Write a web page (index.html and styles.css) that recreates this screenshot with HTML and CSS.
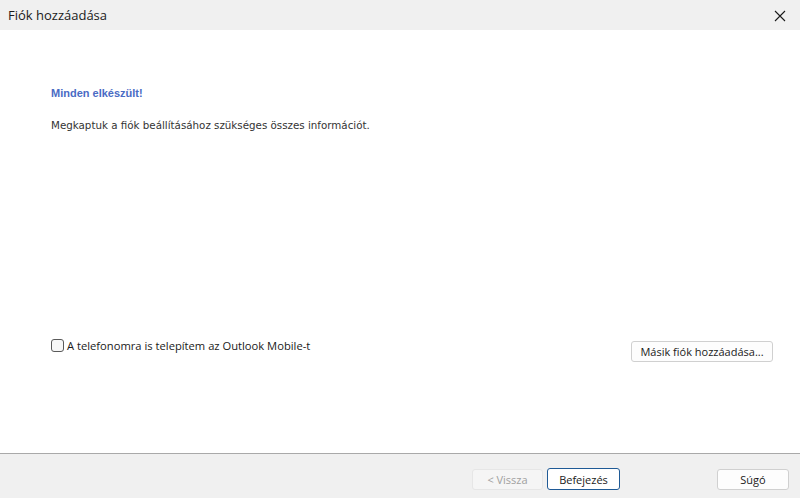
FILE: index.html
```html
<!DOCTYPE html>
<html lang="hu">

<head>
    <meta charset="UTF-8">
    <meta name="viewport" content="width=device-width, initial-scale=1.0">
    <title>Fiók hozzáadása</title>

    <link rel="stylesheet" href="styles.css">
</head>

<body>
    <div class="window">
        <div class="titlebar">
            <span class="title">Fiók hozzáadása</span>
            <span class="close">
                <svg width="12" height="12" viewBox="0 0 12 12">
                    <path d="M1 1 L11 11 M11 1 L1 11" stroke="#1a1a1a" stroke-width="1.1" fill="none" />
                </svg>
            </span>
        </div>

        <div class="content">
            <h2 class="heading">Minden elkészült!</h2>
            <p class="info">Megkaptuk a fiók beállításához szükséges összes információt.</p>

            <div class="options">
                <label class="check">
                    <span class="box"></span>
                    A telefonomra is telepítem az Outlook Mobile-t
                </label>
                <button class="btn another">Másik fiók hozzáadása...</button>
            </div>
        </div>

        <div class="footer">
            <button class="btn back" disabled>&lt; Vissza</button>
            <button class="btn finish">Befejezés</button>
            <button class="btn help">Súgó</button>
        </div>
    </div>
</body>

</html>
```

FILE: styles.css
```css
body {
    margin: 0;
    font-family: "Open Sans", "Liberation Sans", sans-serif;
    font-size: 11px;
    color: #1a1a1a;
}

.window {
    width: 800px;
    height: 498px;
    display: flex;
    flex-direction: column;
    background: #ffffff;
}

.titlebar {
    height: 30px;
    background: #f0f0f0;
    display: flex;
    align-items: center;
    justify-content: space-between;
    padding: 0 14px 0 8px;
}

.title {
    font-size: 13px;
}

.close {
    display: flex;
    padding-top: 1px;
}

.content {
    flex: 1;
    padding: 56px 0 0 51px;
    display: flex;
    flex-direction: column;
}

.heading {
    margin: 0;
    font-family: "Liberation Sans", sans-serif;
    font-size: 11px;
    font-weight: bold;
    color: #4a6bc4;
    line-height: 14px;
}

.info {
    margin: 18px 0 0;
    font-family: "DejaVu Sans", sans-serif;
    font-size: 10.3px;
    line-height: 14px;
    color: #333333;
}

.options {
    margin-top: 208px;
    display: flex;
    justify-content: space-between;
    align-items: flex-start;
    padding-right: 27px;
}

.check {
    display: flex;
    align-items: center;
    gap: 3px;
    margin-top: -2px;
    font-size: 11.2px;
}

.box {
    width: 11px;
    height: 11px;
    border: 1px solid #5a5a5a;
    border-radius: 3px;
    background: #f7f7f7;
}

.btn {
    font-family: "Open Sans", "Liberation Sans", sans-serif;
    font-size: 11px;
    height: 21px;
    padding: 0;
    border: 1px solid #d0d0d0;
    border-radius: 3px;
    background: #fdfdfd;
    color: #1a1a1a;
    box-sizing: border-box;
}

.another {
    width: 142px;
    height: 21px;
    margin-top: 1px;
}

.footer {
    height: 45px;
    border-top: 1px solid #a9a9a9;
    background: #f0f0f0;
    box-sizing: border-box;
    display: flex;
    align-items: flex-start;
    padding: 14px 11px 0 472px;
    gap: 4px;
}

.back {
    width: 71px;
    margin-top: 1px;
    background: #f5f5f5;
    border-color: #e6e6e6;
    color: #a0a0a0;
}

.finish {
    width: 73px;
    height: 22px;
    border-color: #1f5a96;
    background: #ffffff;
}

.help {
    width: 72px;
    margin-top: 1px;
    margin-left: auto;
}
```
